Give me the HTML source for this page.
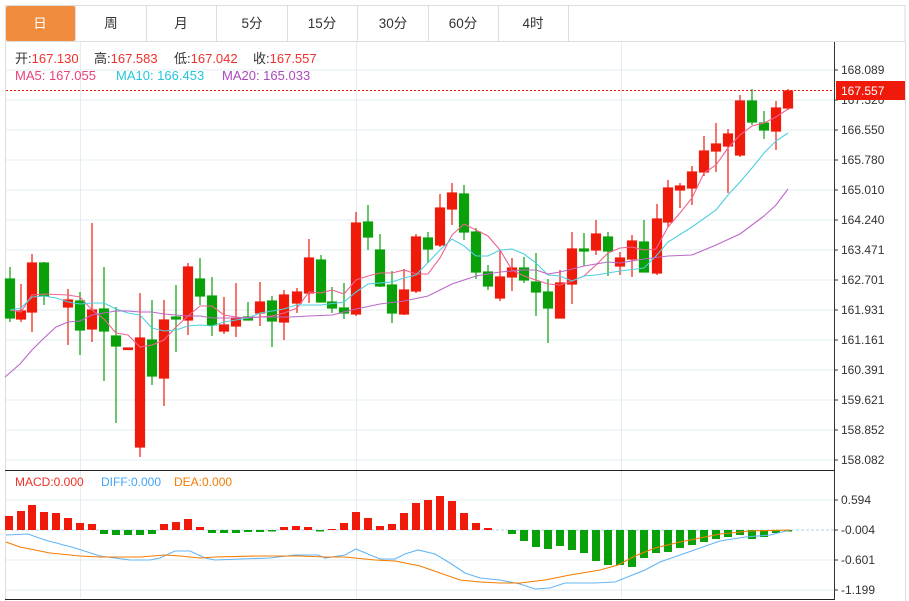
<!DOCTYPE html>
<html><head><meta charset="utf-8"><style>
body{margin:0;background:#fff;width:909px;height:601px;overflow:hidden;font-family:"Liberation Sans","Noto Sans CJK SC",sans-serif}
svg{position:absolute;left:0;top:0}
</style></head><body>
<svg width="909" height="601" xmlns="http://www.w3.org/2000/svg" font-family="Liberation Sans, Noto Sans CJK SC, sans-serif">
<!-- tabs -->
<rect x="5.5" y="5.5" width="899.5" height="36" fill="#fff" stroke="#ddd"/>
<rect x="6" y="6" width="69" height="35" rx="2" fill="#f28c3d"/>
<g stroke="#ddd"><line x1="75.5" y1="6" x2="75.5" y2="41"/><line x1="146.5" y1="6" x2="146.5" y2="41"/><line x1="216.5" y1="6" x2="216.5" y2="41"/><line x1="287.5" y1="6" x2="287.5" y2="41"/><line x1="357.5" y1="6" x2="357.5" y2="41"/><line x1="428.5" y1="6" x2="428.5" y2="41"/><line x1="498.5" y1="6" x2="498.5" y2="41"/><line x1="568.5" y1="6" x2="568.5" y2="41"/></g>
<g font-size="13.5" text-anchor="middle" fill="#333"><text x="40" y="28" fill="#fff">日</text><text x="111" y="28">周</text><text x="181" y="28">月</text><text x="252" y="28">5分</text><text x="322" y="28">15分</text><text x="393" y="28">30分</text><text x="463" y="28">60分</text><text x="533" y="28">4时</text></g>
<!-- frame -->
<line x1="5.5" y1="41" x2="5.5" y2="601" stroke="#ddd"/>
<line x1="905.5" y1="41" x2="905.5" y2="601" stroke="#ddd"/>
<!-- grid -->
<g stroke="#e3ecf3">
<line x1="6" y1="70" x2="834" y2="70"/><line x1="6" y1="100" x2="834" y2="100"/><line x1="6" y1="130" x2="834" y2="130"/><line x1="6" y1="160" x2="834" y2="160"/><line x1="6" y1="190" x2="834" y2="190"/><line x1="6" y1="220" x2="834" y2="220"/><line x1="6" y1="250" x2="834" y2="250"/><line x1="6" y1="280" x2="834" y2="280"/><line x1="6" y1="310" x2="834" y2="310"/><line x1="6" y1="340" x2="834" y2="340"/><line x1="6" y1="370" x2="834" y2="370"/><line x1="6" y1="400" x2="834" y2="400"/><line x1="6" y1="430" x2="834" y2="430"/><line x1="6" y1="460" x2="834" y2="460"/>
<line x1="6" y1="500" x2="834" y2="500"/><line x1="6" y1="560" x2="834" y2="560"/><line x1="6" y1="590" x2="834" y2="590"/>
<line x1="80.5" y1="42" x2="80.5" y2="598"/><line x1="356.5" y1="42" x2="356.5" y2="598"/><line x1="621.5" y1="42" x2="621.5" y2="598"/>
</g>
<line x1="6" y1="530" x2="834" y2="530" stroke="#a9d6ef" stroke-dasharray="3,2"/>
<!-- axes -->
<line x1="834.5" y1="42" x2="834.5" y2="600" stroke="#333"/>
<line x1="5" y1="470.5" x2="834" y2="470.5" stroke="#222"/>
<line x1="5" y1="599.5" x2="834" y2="599.5" stroke="#222"/>
<g stroke="#333"><line x1="834" y1="70" x2="838" y2="70"/><line x1="834" y1="100" x2="838" y2="100"/><line x1="834" y1="130" x2="838" y2="130"/><line x1="834" y1="160" x2="838" y2="160"/><line x1="834" y1="190" x2="838" y2="190"/><line x1="834" y1="220" x2="838" y2="220"/><line x1="834" y1="250" x2="838" y2="250"/><line x1="834" y1="280" x2="838" y2="280"/><line x1="834" y1="310" x2="838" y2="310"/><line x1="834" y1="340" x2="838" y2="340"/><line x1="834" y1="370" x2="838" y2="370"/><line x1="834" y1="400" x2="838" y2="400"/><line x1="834" y1="430" x2="838" y2="430"/><line x1="834" y1="460" x2="838" y2="460"/><line x1="834" y1="500" x2="838" y2="500"/><line x1="834" y1="530" x2="838" y2="530"/><line x1="834" y1="560" x2="838" y2="560"/><line x1="834" y1="590" x2="838" y2="590"/></g>
<g font-size="12" fill="#333">
<text x="841" y="74">168.089</text><text x="841" y="104">167.320</text><text x="841" y="134">166.550</text><text x="841" y="164">165.780</text><text x="841" y="194">165.010</text><text x="841" y="224">164.240</text><text x="841" y="254">163.471</text><text x="841" y="284">162.701</text><text x="841" y="314">161.931</text><text x="841" y="344">161.161</text><text x="841" y="374">160.391</text><text x="841" y="404">159.621</text><text x="841" y="434">158.852</text><text x="841" y="464">158.082</text>
<text x="841" y="504">0.594</text><text x="841" y="534">-0.004</text><text x="841" y="564">-0.601</text><text x="841" y="594">-1.199</text>
</g>
<!-- last price -->
<line x1="6" y1="90.5" x2="834" y2="90.5" stroke="#f01a0a" stroke-dasharray="2,2"/>
<rect x="836" y="81" width="69" height="19" fill="#f01a0a"/>
<text x="841" y="95" font-size="12" fill="#fff">167.557</text>
<!-- info text -->
<g font-size="13">
<text x="15" y="63" fill="#333">开:<tspan fill="#f0302a">167.130</tspan></text>
<text x="94" y="63" fill="#333">高:<tspan fill="#f0302a">167.583</tspan></text>
<text x="174" y="63" fill="#333">低:<tspan fill="#f0302a">167.042</tspan></text>
<text x="253" y="63" fill="#333">收:<tspan fill="#f0302a">167.557</tspan></text>
<text x="15" y="80" fill="#ec407a">MA5: 167.055</text>
<text x="116" y="80" fill="#26c6da">MA10: 166.453</text>
<text x="222" y="80" fill="#ab47bc">MA20: 165.033</text>
<text x="15" y="486" font-size="12" fill="#f0302a">MACD:0.000</text>
<text x="101" y="486" font-size="12" fill="#42a5f5">DIFF:0.000</text>
<text x="174" y="486" font-size="12" fill="#f57c00">DEA:0.000</text>
</g>
<!-- candles -->
<g stroke-width="1.2">
<g stroke="#0aa00a" fill="#0aa00a">
<line x1="10" y1="267" x2="10" y2="322"/><rect x="5.5" y="279" width="9" height="39"/>
<line x1="44" y1="262" x2="44" y2="305"/><rect x="39.5" y="263" width="9" height="33"/>
<line x1="80" y1="292" x2="80" y2="355"/><rect x="75.5" y="301" width="9" height="29"/>
<line x1="104" y1="267" x2="104" y2="381"/><rect x="99.5" y="309" width="9" height="22"/>
<line x1="116" y1="307" x2="116" y2="423"/><rect x="111.5" y="336" width="9" height="10"/>
<line x1="152" y1="300" x2="152" y2="385"/><rect x="147.5" y="340" width="9" height="36"/>
<line x1="176" y1="285" x2="176" y2="352"/><rect x="171.5" y="317" width="9" height="2"/>
<line x1="200" y1="258" x2="200" y2="305"/><rect x="195.5" y="279" width="9" height="17"/>
<line x1="212" y1="277" x2="212" y2="336"/><rect x="207.5" y="296" width="9" height="29"/>
<line x1="248" y1="302" x2="248" y2="320"/><rect x="243.5" y="317" width="9" height="3"/>
<line x1="272" y1="296" x2="272" y2="347"/><rect x="267.5" y="301" width="9" height="20"/>
<line x1="321" y1="255" x2="321" y2="302"/><rect x="316.5" y="260" width="9" height="42"/>
<line x1="332" y1="287" x2="332" y2="313"/><rect x="327.5" y="302" width="9" height="6"/>
<line x1="344" y1="283" x2="344" y2="319"/><rect x="339.5" y="308" width="9" height="5"/>
<line x1="368" y1="205" x2="368" y2="250"/><rect x="363.5" y="222" width="9" height="15"/>
<line x1="380" y1="234" x2="380" y2="287"/><rect x="375.5" y="250" width="9" height="36"/>
<line x1="392" y1="271" x2="392" y2="323"/><rect x="387.5" y="285" width="9" height="28"/>
<line x1="428" y1="232" x2="428" y2="263"/><rect x="423.5" y="238" width="9" height="11"/>
<line x1="464" y1="185" x2="464" y2="240"/><rect x="459.5" y="194" width="9" height="38"/>
<line x1="476" y1="228" x2="476" y2="279"/><rect x="471.5" y="232" width="9" height="40"/>
<line x1="488" y1="265" x2="488" y2="290"/><rect x="483.5" y="272" width="9" height="14"/>
<line x1="524" y1="257" x2="524" y2="283"/><rect x="519.5" y="268" width="9" height="12"/>
<line x1="536" y1="253" x2="536" y2="316"/><rect x="531.5" y="282" width="9" height="10"/>
<line x1="548" y1="279" x2="548" y2="343"/><rect x="543.5" y="292" width="9" height="16"/>
<line x1="584" y1="233" x2="584" y2="266"/><rect x="579.5" y="249" width="9" height="2"/>
<line x1="608" y1="232" x2="608" y2="276"/><rect x="603.5" y="237" width="9" height="14"/>
<line x1="644" y1="220" x2="644" y2="272"/><rect x="639.5" y="242" width="9" height="30"/>
<line x1="752" y1="89" x2="752" y2="125"/><rect x="747.5" y="101" width="9" height="21"/>
<line x1="764" y1="111" x2="764" y2="139"/><rect x="759.5" y="123" width="9" height="7"/>
</g>
<g stroke="#f01a0a" fill="#f01a0a">
<line x1="21" y1="284" x2="21" y2="322"/><rect x="16.5" y="311" width="9" height="8"/>
<line x1="32" y1="254" x2="32" y2="332"/><rect x="27.5" y="263" width="9" height="49"/>
<line x1="68" y1="289" x2="68" y2="345"/><rect x="63.5" y="300" width="9" height="7"/>
<line x1="92" y1="223" x2="92" y2="342"/><rect x="87.5" y="310" width="9" height="19"/>
<rect x="123.5" y="348" width="9" height="1.5"/>
<line x1="140" y1="293" x2="140" y2="457"/><rect x="135.5" y="338" width="9" height="109"/>
<line x1="164" y1="300" x2="164" y2="406"/><rect x="159.5" y="320" width="9" height="58"/>
<line x1="188" y1="263" x2="188" y2="335"/><rect x="183.5" y="267" width="9" height="53"/>
<line x1="224" y1="297" x2="224" y2="334"/><rect x="219.5" y="325" width="9" height="6"/>
<line x1="236" y1="283" x2="236" y2="337"/><rect x="231.5" y="318" width="9" height="8"/>
<line x1="260" y1="282" x2="260" y2="326"/><rect x="255.5" y="302" width="9" height="11"/>
<line x1="284" y1="290" x2="284" y2="340"/><rect x="279.5" y="295" width="9" height="27"/>
<line x1="297" y1="288" x2="297" y2="313"/><rect x="292.5" y="292" width="9" height="11"/>
<line x1="309" y1="239" x2="309" y2="303"/><rect x="304.5" y="258" width="9" height="35"/>
<line x1="356" y1="212" x2="356" y2="316"/><rect x="351.5" y="223" width="9" height="91"/>
<line x1="404" y1="269" x2="404" y2="315"/><rect x="399.5" y="290" width="9" height="24"/>
<line x1="416" y1="234" x2="416" y2="293"/><rect x="411.5" y="237" width="9" height="54"/>
<line x1="440" y1="194" x2="440" y2="247"/><rect x="435.5" y="208" width="9" height="37"/>
<line x1="452" y1="183" x2="452" y2="225"/><rect x="447.5" y="193" width="9" height="16"/>
<line x1="500" y1="250" x2="500" y2="301"/><rect x="495.5" y="277" width="9" height="21"/>
<line x1="512" y1="258" x2="512" y2="291"/><rect x="507.5" y="268" width="9" height="9"/>
<line x1="560" y1="270" x2="560" y2="318"/><rect x="555.5" y="283" width="9" height="35"/>
<line x1="572" y1="232" x2="572" y2="304"/><rect x="567.5" y="249" width="9" height="35"/>
<line x1="596" y1="220" x2="596" y2="255"/><rect x="591.5" y="234" width="9" height="16"/>
<line x1="620" y1="252" x2="620" y2="275"/><rect x="615.5" y="258" width="9" height="8"/>
<line x1="632" y1="235" x2="632" y2="277"/><rect x="627.5" y="241" width="9" height="18"/>
<line x1="657" y1="204" x2="657" y2="275"/><rect x="652.5" y="219" width="9" height="54"/>
<line x1="668" y1="180" x2="668" y2="227"/><rect x="663.5" y="188" width="9" height="34"/>
<line x1="680" y1="183" x2="680" y2="208"/><rect x="675.5" y="186" width="9" height="4"/>
<line x1="692" y1="166" x2="692" y2="205"/><rect x="687.5" y="172" width="9" height="16"/>
<line x1="704" y1="136" x2="704" y2="176"/><rect x="699.5" y="151" width="9" height="21"/>
<line x1="716" y1="123" x2="716" y2="172"/><rect x="711.5" y="144" width="9" height="7"/>
<line x1="728" y1="129" x2="728" y2="193"/><rect x="723.5" y="134" width="9" height="12"/>
<line x1="740" y1="95" x2="740" y2="157"/><rect x="735.5" y="101" width="9" height="54"/>
<line x1="776" y1="101" x2="776" y2="150"/><rect x="771.5" y="108" width="9" height="23"/>
<line x1="788" y1="89" x2="788" y2="110"/><rect x="783.5" y="91" width="9" height="17"/>
</g>
</g>
<!-- MA lines -->
<g fill="none" stroke-width="1.1">
<polyline stroke="#f06292" points="10,310 21,312 32,295 44,294 68,295 80,297 92,310 104,319 116,333 128,335 140,347 152,345 164,340 176,327 188,316 200,306 212,306 224,315 236,317 248,318 260,317 272,316 284,313 297,308 309,292 321,293 332,290 344,294 356,280 368,276 380,273 392,273 404,270 416,274 428,274 440,258 452,235 464,224 476,230 488,236 500,250 512,270 524,276 536,280 548,284 560,285 572,281 584,276 596,265 608,253 620,248 632,247 644,250 656,249 668,227 680,213 692,198 704,173 716,165 728,148 740,135 752,126 764,123 776,117 788,109"/>
<polyline stroke="#4dd0e1" points="10,310 21,308 32,297 44,296 56,298 68,302 80,304 92,303 104,303 116,309 128,313 140,315 152,328 164,331 176,330 188,326 200,325 212,326 224,322 236,320 248,318 260,313 272,311 284,309 296,305 309,305 321,305 344,302 356,292 368,284 392,282 404,278 416,275 440,250 452,239 464,246 476,256 488,256 500,250 512,249 524,254 536,263 548,275 560,276 572,281 584,276 596,275 620,271 644,268 656,256 668,242 692,227 716,210 728,195 740,182 752,168 764,153 776,141 788,133"/>
<polyline stroke="#ba68c8" points="5,377 20,364 32,350 44,338 56,327 68,322 80,321 92,315 104,313 116,311 128,311 140,312 152,312 164,314 176,315 188,316 200,316 212,318 224,318 236,318 260,317 290,317 309,316 332,315 356,309 380,304 404,301 428,296 452,284 476,276 500,272 524,270 536,270 548,274 560,272 584,266 608,262 620,263 644,259 668,256 692,255 716,245 740,234 764,216 776,205 788,189"/>
</g>
<!-- MACD bars -->
<g fill="#f01a0a">
<rect x="5" y="516" width="8" height="14"/><rect x="17" y="511" width="8" height="19"/><rect x="28" y="505" width="8" height="25"/><rect x="40" y="512" width="8" height="18"/><rect x="52" y="513" width="8" height="17"/><rect x="64" y="518" width="8" height="12"/><rect x="76" y="523" width="8" height="7"/><rect x="88" y="524" width="8" height="6"/>
<rect x="160" y="524" width="8" height="6"/><rect x="172" y="522" width="8" height="8"/><rect x="184" y="519" width="8" height="11"/><rect x="196" y="527" width="8" height="3"/>
<rect x="280" y="527" width="8" height="3"/><rect x="292" y="526" width="8" height="4"/><rect x="304" y="527" width="8" height="3"/><rect x="328" y="529" width="8" height="1"/><rect x="340" y="523" width="8" height="7"/><rect x="352" y="512" width="8" height="18"/><rect x="364" y="518" width="8" height="12"/><rect x="376" y="526" width="8" height="4"/><rect x="388" y="524" width="8" height="6"/><rect x="400" y="513" width="8" height="17"/><rect x="412" y="503" width="8" height="27"/><rect x="424" y="500" width="8" height="30"/><rect x="436" y="496" width="8" height="34"/><rect x="448" y="501" width="8" height="29"/><rect x="460" y="513" width="8" height="17"/><rect x="472" y="523" width="8" height="7"/><rect x="484" y="528" width="8" height="2"/>
</g>
<g fill="#0aa00a">
<rect x="100" y="530" width="8" height="4"/><rect x="112" y="530" width="8" height="5"/><rect x="124" y="530" width="8" height="5"/><rect x="136" y="530" width="8" height="5"/><rect x="148" y="530" width="8" height="4"/>
<rect x="208" y="530" width="8" height="3"/><rect x="220" y="530" width="8" height="3"/><rect x="232" y="530" width="8" height="3"/><rect x="244" y="530" width="8" height="2"/><rect x="256" y="530" width="8" height="2"/><rect x="268" y="530" width="8" height="1.5"/><rect x="316" y="530" width="8" height="1.5"/>
<rect x="508" y="530" width="8" height="4"/><rect x="520" y="530" width="8" height="11"/><rect x="532" y="530" width="8" height="17"/><rect x="544" y="530" width="8" height="19"/><rect x="556" y="530" width="8" height="16"/><rect x="568" y="530" width="8" height="20"/><rect x="580" y="530" width="8" height="23"/><rect x="592" y="530" width="8" height="31"/><rect x="604" y="530" width="8" height="35"/><rect x="616" y="530" width="8" height="35"/><rect x="628" y="530" width="8" height="37"/><rect x="640" y="530" width="8" height="28"/><rect x="652" y="530" width="8" height="23"/><rect x="664" y="530" width="8" height="22"/><rect x="676" y="530" width="8" height="18"/><rect x="688" y="530" width="8" height="15"/><rect x="700" y="530" width="8" height="12"/><rect x="712" y="530" width="8" height="9"/><rect x="724" y="530" width="8" height="7"/><rect x="736" y="530" width="8" height="5"/><rect x="748" y="530" width="8" height="9"/><rect x="760" y="530" width="8" height="7"/><rect x="772" y="530" width="8" height="3"/><rect x="784" y="530" width="8" height="1.5"/>
</g>
<g fill="none" stroke-width="1.1">
<polyline stroke="#64b5f6" points="6,535 28,534 45,540 75,548 100,556 115,558 130,560 150,560 160,558 175,551 190,551 205,558 215,560 240,559 270,558 295,555 318,555 325,558 345,555 356,549 368,554 380,559 395,559 405,554 418,550 435,554 450,563 465,573 480,578 500,580 520,584 535,589 550,588 565,583 595,583 615,582 630,576 645,570 660,562 680,555 700,548 720,541 745,537 770,535 790,530"/>
<polyline stroke="#f57c00" points="6,542 20,547 50,553 80,556 100,557 140,557 165,555 180,556 200,558 215,557 260,556 300,556 325,557 345,557 375,560 395,561 420,566 440,573 460,580 480,582 500,583 520,583 545,580 570,575 600,570 618,565 635,556 655,548 680,542 700,538 720,534 750,531 790,530"/>
</g>
</svg>
</body></html>
